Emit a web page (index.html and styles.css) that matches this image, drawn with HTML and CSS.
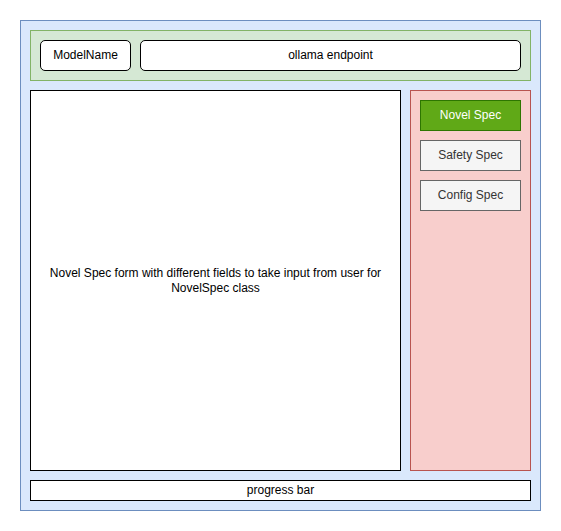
FILE: index.html
```html
<!DOCTYPE html>
<html>
<head>
<meta charset="utf-8">
<link rel="stylesheet" href="styles.css">
</head>
<body>
<div class="frame">
  <div class="topbar">
    <div class="field model">ModelName</div>
    <div class="field endpoint">ollama endpoint</div>
  </div>
  <div class="middle">
    <div class="form">Novel Spec form with different fields to take input from user for NovelSpec class</div>
    <div class="side">
      <div class="btn active">Novel Spec</div>
      <div class="btn">Safety Spec</div>
      <div class="btn">Config Spec</div>
    </div>
  </div>
  <div class="progress">progress bar</div>
</div>
</body>
</html>
```
FILE: styles.css
```css
* { box-sizing: border-box; }
html, body { margin: 0; padding: 0; background: #ffffff; }
body {
  font-family: "Liberation Sans", Arial, Helvetica, sans-serif;
  font-size: 12px;
  line-height: 1.2;
  color: #000000;
  padding: 20px 0 0 20px;
}
.frame {
  width: 521px;
  height: 491px;
  background: #dae8fc;
  border: 1px solid #6c8ebf;
  padding: 9px;
  display: flex;
  flex-direction: column;
  gap: 9px;
}
.topbar {
  height: 51px;
  background: #d5e8d4;
  border: 1px solid #82b366;
  padding: 9px;
  display: flex;
  gap: 9px;
}
.field {
  height: 31px;
  background: #ffffff;
  border: 1px solid #000000;
  border-radius: 5px;
  display: flex;
  align-items: center;
  justify-content: center;
}
.model { width: 91px; }
.endpoint { flex: 1; }
.middle {
  height: 381px;
  display: flex;
  gap: 9px;
}
.form {
  width: 371px;
  background: #ffffff;
  border: 1px solid #000000;
  display: flex;
  align-items: center;
  justify-content: center;
  text-align: center;
  padding: 0 10px;
}
.side {
  flex: 1;
  background: #f8cecc;
  border: 1px solid #b85450;
  padding: 9px;
  display: flex;
  flex-direction: column;
  gap: 9px;
}
.btn {
  height: 31px;
  background: #f5f5f5;
  border: 1px solid #666666;
  color: #333333;
  display: flex;
  align-items: center;
  justify-content: center;
}
.btn.active {
  background: #60a917;
  border-color: #2d7600;
  color: #ffffff;
}
.progress {
  height: 21px;
  background: #ffffff;
  border: 1px solid #000000;
  display: flex;
  align-items: center;
  justify-content: center;
}
```
